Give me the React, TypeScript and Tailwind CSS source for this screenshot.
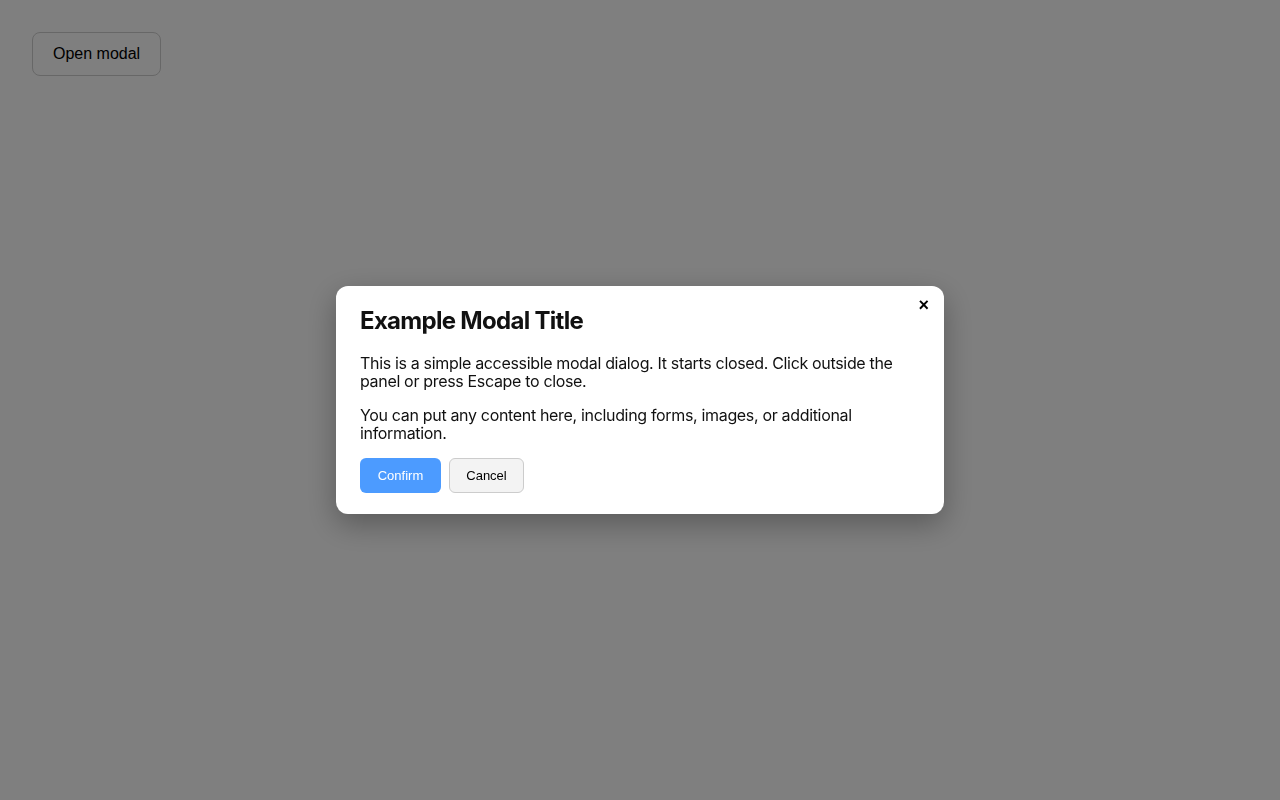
import { useState, useEffect } from 'react';

export default function App() {
  const [open, setOpen] = useState(true);

  useEffect(() => {
    const onKey = (e: KeyboardEvent) => {
      if (e.key === 'Escape') setOpen(false);
    };
    window.addEventListener('keydown', onKey);
    return () => window.removeEventListener('keydown', onKey);
  }, []);

  return (
    <div className="relative min-h-screen bg-white p-8 font-['Liberation_Sans',Arial,sans-serif]">
      <button
        onClick={() => setOpen(true)}
        className="h-11 px-5 rounded-lg border border-[#cfcfcf] bg-[#fefefe] text-base text-black"
      >
        Open modal
      </button>

      {open && (
        <div
          className="fixed inset-0 flex items-center justify-center bg-black/50"
          onClick={() => setOpen(false)}
        >
          <div
            role="dialog"
            aria-modal="true"
            onClick={(e) => e.stopPropagation()}
            className="relative w-[608px] rounded-xl bg-white px-6 pt-[21px] pb-[21px] shadow-[0_10px_30px_rgba(0,0,0,0.3)] font-['Inter',sans-serif] text-[#111]"
          >
            <button
              onClick={() => setOpen(false)}
              aria-label="Close"
              className="absolute top-[10px] right-[15px] text-[18px] leading-none font-bold text-black font-['Liberation_Sans',Arial,sans-serif]"
            >
              ×
            </button>
            <h2 className="text-2xl font-bold leading-[28px] tracking-[-0.7px] text-[#111]">Example Modal Title</h2>
            <p className="mt-[19px] text-base leading-[18px] tracking-[-0.33px]">
              This is a simple accessible modal dialog. It starts closed. Click outside the panel or press Escape to close.
            </p>
            <p className="mt-4 text-base leading-[18px] tracking-[-0.33px]">
              You can put any content here, including forms, images, or additional information.
            </p>
            <div className="mt-4 flex gap-2 font-['Liberation_Sans',Arial,sans-serif]">
              <button
                onClick={() => setOpen(false)}
                className="h-[35px] w-[81px] rounded-md bg-[#4c9bff] text-[13px] text-white"
              >
                Confirm
              </button>
              <button
                onClick={() => setOpen(false)}
                className="h-[35px] w-[75px] rounded-md border border-[#cccccc] bg-[#f3f3f3] text-[13px] text-black"
              >
                Cancel
              </button>
            </div>
          </div>
        </div>
      )}
    </div>
  );
}
